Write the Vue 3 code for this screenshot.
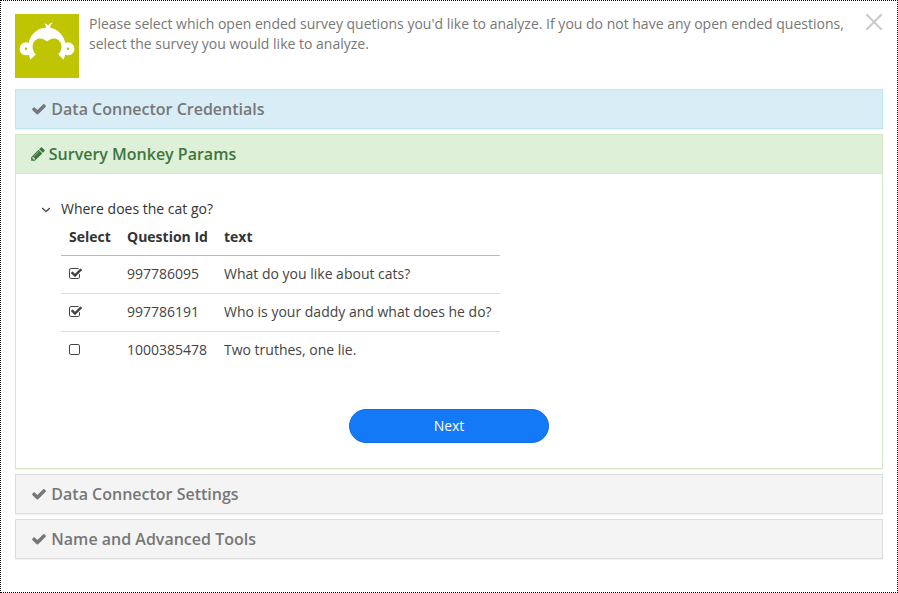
<script setup>
import { ref } from 'vue'

const checkPath =
  'M1671 566q0 40-28 68l-724 724-136 136q-28 28-68 28t-68-28l-136-136-362-362q-28-28-28-68t28-68l136-136q28-28 68-28t68 28l294 295 656-657q28-28 68-28t68 28l136 136q28 28 28 68z'
const pencilPath =
  'M491 1536l91-91-235-235-91 91v107h128v128h107zm523-928q0-22-22-22-10 0-17 7l-542 542q-7 7-7 17 0 22 22 22 10 0 17-7l542-542q7-7 7-17zm-54-192l416 416-832 832h-416v-416zm683 96q0 53-37 90l-166 166-416-416 166-165q36-38 90-38 53 0 91 38l235 234q37 39 37 91z'
const checkedPath =
  'M1472 930v318q0 119-84.5 203.5t-203.5 84.5h-832q-119 0-203.5-84.5t-84.5-203.5v-832q0-119 84.5-203.5t203.5-84.5h832q63 0 117 25 15 7 18 23 3 17-9 29l-49 49q-10 10-23 10-3 0-9-2-23-6-45-6h-832q-66 0-113 47t-47 113v832q0 66 47 113t113 47h832q66 0 113-47t47-113v-254q0-13 9-22l64-64q10-10 23-10 6 0 12 3 20 8 20 29zm231-489l-814 814q-24 24-57 24t-57-24l-430-430q-24-24-24-57t24-57l110-110q24-24 57-24t57 24l263 263 647-647q24-24 57-24t57 24l110 110q24 24 24 57t-24 57z'
const emptyPath =
  'M1184 256h-832q-66 0-113 47t-47 113v832q0 66 47 113t113 47h832q66 0 113-47t47-113v-832q0-66-47-113t-113-47zm288 160v832q0 119-84.5 203.5t-203.5 84.5h-832q-119 0-203.5-84.5t-84.5-203.5v-832q0-119 84.5-203.5t203.5-84.5h832q119 0 203.5 84.5t84.5 203.5z'

const questions = ref([
  { id: '997786095', text: 'What do you like about cats?', selected: true },
  { id: '997786191', text: 'Who is your daddy and what does he do?', selected: true },
  { id: '1000385478', text: 'Two truthes, one lie.', selected: false },
])

const sections = [
  { title: 'Data Connector Credentials', kind: 'info' },
  { title: 'Survery Monkey Params', kind: 'active' },
  { title: 'Data Connector Settings', kind: 'plain' },
  { title: 'Name and Advanced Tools', kind: 'plain' },
]
</script>

<template>
  <main class="dialog">
    <header class="intro">
      <svg class="logo" viewBox="0 0 64 64">
        <rect width="64" height="64" fill="#bfc500" />
        <g fill="none" stroke="#fff">
          <circle cx="11" cy="34.8" r="3.9" stroke-width="5.2" />
          <circle cx="53" cy="34.8" r="3.9" stroke-width="5.2" />
        </g>
        <path
          fill="#fff"
          d="M13 35C13 22 21 13.5 32 13.5S51 22 51 35L50 41.5L48.6 45.4L43.2 40.6C46 37.5 46.9 34.3 46.3 31C45 24.6 38 21.8 32 27.5C26 21.8 19 24.6 17.7 31C17.1 34.3 18 37.5 20.8 40.6L15.4 45.4L14 41.5Z"
        />
        <path fill="#fff" d="M31 14.5C31.2 12 30.7 10.8 29 9.6C31.2 9.7 32.5 10.6 33 11.7C34.2 9.8 36 8.6 38 8.5C35.8 10.2 35.4 11.6 35 14.5Z" />
      </svg>
      <p class="message">
        Please select which open ended survey quetions you'd like to analyze. If you do not have any open ended questions, select the survey you would like to analyze.
      </p>
      <button class="close" aria-label="Close">
        <svg viewBox="0 0 16 16">
          <path d="M.8.8L15.2 15.2M15.2.8L.8 15.2" fill="none" stroke="#c9c9c9" stroke-width="2" stroke-linecap="round" />
        </svg>
      </button>
    </header>

    <section v-for="s in sections" :key="s.title" class="panel" :class="s.kind">
      <h4 class="heading">
        <svg class="icon" viewBox="0 0 1792 1792">
          <path :d="s.kind === 'active' ? pencilPath : checkPath" />
        </svg>
        <span>{{ s.title }}</span>
      </h4>
      <div v-if="s.kind === 'active'" class="body">
        <div class="survey">
          <svg class="caret" viewBox="0 0 10 6">
            <path d="M1.2 1L5 4.7L8.8 1" fill="none" stroke="#444" stroke-width="1.3" />
          </svg>
          <span>Where does the cat go?</span>
        </div>
        <table class="questions">
          <thead>
            <tr>
              <th class="c-select">Select</th>
              <th class="c-id">Question Id</th>
              <th>text</th>
            </tr>
          </thead>
          <tbody>
            <tr v-for="q in questions" :key="q.id" @click="q.selected = !q.selected">
              <td>
                <svg class="box" viewBox="64 0 1792 1792"><path :d="q.selected ? checkedPath : emptyPath" /></svg>
              </td>
              <td>{{ q.id }}</td>
              <td>{{ q.text }}</td>
            </tr>
          </tbody>
        </table>
        <button class="next">Next</button>
      </div>
    </section>
  </main>
</template>

<style>
body {
  margin: 0;
  background: #fff;
}
</style>

<style scoped>
.dialog {
  box-sizing: border-box;
  width: 898px;
  height: 593px;
  padding: 13px 14px;
  border: 1px dotted #000;
  font: 14px/20px 'Open Sans', sans-serif;
  color: #333;
}
.intro {
  display: flex;
  height: 75px;
}
.logo {
  flex: none;
  width: 64px;
  height: 64px;
}
.message {
  flex: none;
  width: 766px;
  margin: 0 0 0 10px;
  color: #777;
}
.close {
  width: 16px;
  height: 16px;
  margin: 0 1px 0 auto;
  padding: 0;
  border: 0;
  background: none;
}
.close svg {
  display: block;
  width: 16px;
  height: 16px;
}
.panel {
  box-sizing: border-box;
  margin-bottom: 5px;
  border: 1px solid #ddd;
  box-shadow: 0 1px 1px rgba(0, 0, 0, 0.05);
}
.heading {
  display: flex;
  align-items: center;
  box-sizing: border-box;
  height: 38px;
  margin: 0;
  padding-left: 15px;
  font-size: 16px;
  line-height: 18px;
  font-weight: 600;
  color: #777;
  background: #f4f4f4;
}
.icon {
  width: 16px;
  height: 16px;
  margin: 0 4.3px 1px 0;
  fill: currentColor;
}
.info {
  border-color: #bce8f1;
}
.info .heading {
  background: #d9edf7;
}
.active {
  height: 335px;
  border-color: #d6e9c6;
}
.active .heading {
  height: 39px;
  padding-left: 14px;
  border-bottom: 1px solid #d6e9c6;
  color: #3c763d;
  background: #dff0d8;
}
.active .icon {
  margin-right: 2.8px;
}
.body {
  display: flex;
  flex-direction: column;
  padding: 25px 25px 0;
}
.survey {
  display: flex;
  align-items: center;
}
.caret {
  width: 10px;
  height: 6px;
  margin: 2px 10px 0 0;
}
.questions {
  width: 439px;
  margin-left: 20px;
  border-collapse: collapse;
  table-layout: fixed;
  color: #444;
}
th,
td {
  height: 20px;
  padding: 8px 0 9px 8px;
  text-align: left;
  white-space: nowrap;
}
th {
  padding-bottom: 8px;
  color: #333;
  font-weight: 700;
  border-bottom: 1px solid #bbb;
}
.c-select {
  width: 50px;
}
.c-id {
  width: 89px;
}
tbody tr + tr td {
  border-top: 1px solid #ddd;
}
.box {
  display: block;
  width: 14px;
  height: 14px;
  fill: #444;
}
.next {
  align-self: center;
  width: 200px;
  height: 34px;
  margin-top: 40px;
  padding: 0;
  border: 1px solid #0f6fe8;
  border-radius: 17px;
  background: #1379f6;
  color: #fff;
  font: 14px/20px 'Open Sans', sans-serif;
}
</style>
